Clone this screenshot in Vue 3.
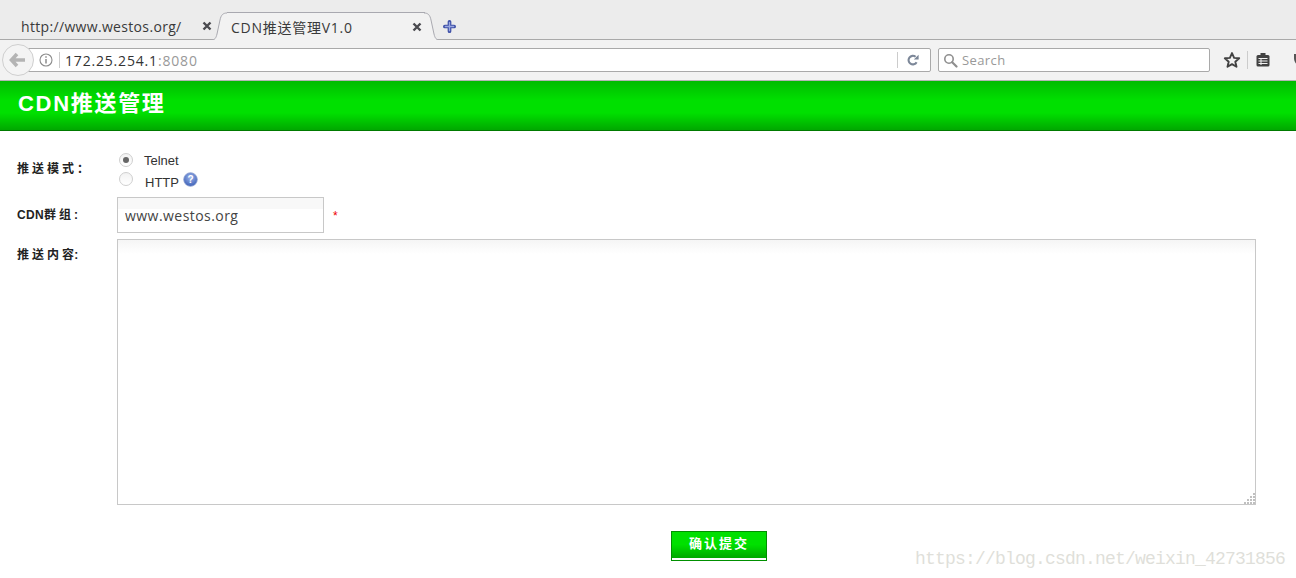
<script setup>
const tabs = [
  { title: 'http://www.westos.org/', active: false },
  { title: 'CDN推送管理V1.0', active: true }
]
const gripDots = []
for (let r = 0; r < 4; r++) {
  for (let c = 3 - r; c < 4; c++) {
    gripDots.push({ x: c * 3, y: r * 3 })
  }
}
</script>

<template>
  <div class="page">
    <div class="tabbar">
      <div v-for="t in tabs" :key="t.title" class="tab" :class="{ active: t.active }">
        <svg v-if="t.active" class="curve left" width="16" height="29" viewBox="0 0 16 29">
          <path d="M0 28C4 28 5 26 6 22L9 8C10 3 12 1 16 1V29H0Z" fill="#f2f2f2" />
          <path d="M0 28C4 28 5 26 6 22L9 8C10 3 12 1 16 1" fill="none" stroke="#a9a9b0" />
        </svg>
        <span class="tab-title">{{ t.title }}</span>
        <svg class="close" width="10" height="10" viewBox="0 0 10 10">
          <path d="M1.5 1.5L8.5 8.5M8.5 1.5L1.5 8.5" stroke="#4a4a4f" stroke-width="2.4" />
        </svg>
        <svg v-if="t.active" class="curve right" width="16" height="29" viewBox="0 0 16 29">
          <path d="M0 1C4 1 6 3 7 8L10 22C11 26 12 28 16 28V29H0Z" fill="#f2f2f2" />
          <path d="M0 1C4 1 6 3 7 8L10 22C11 26 12 28 16 28" fill="none" stroke="#a9a9b0" />
        </svg>
      </div>
      <svg class="plus" width="13" height="13" viewBox="0 0 14 14">
        <path d="M7 2V12M2 7H12" stroke="#3f51a8" stroke-width="4" stroke-linecap="round" />
        <path d="M7 2.5V11.5M2.5 7H11.5" stroke="#9aa8e0" stroke-width="1.4" stroke-linecap="round" />
      </svg>
    </div>

    <div class="toolbar">
      <div class="urlbar">
        <svg class="info" width="14" height="14" viewBox="0 0 14 14">
          <circle cx="7" cy="7" r="6" fill="none" stroke="#8c8c8c" stroke-width="1.1" />
          <path d="M7 6V10.5M7 3.3V4.8" stroke="#8c8c8c" stroke-width="1.5" />
        </svg>
        <span class="sep"></span>
        <span class="url">172.25.254.1<span class="port">:8080</span></span>
        <span class="sep end"></span>
        <svg class="reload" width="14" height="14" viewBox="0 0 14 14">
          <path d="M10.6 9.2A4.3 4.3 0 1 1 9.6 3.8" fill="none" stroke="#7c8798" stroke-width="2.1" />
          <path d="M7.8 6.6H12.6V1.8Z" fill="#7c8798" />
        </svg>
      </div>
      <div class="searchbar">
        <svg width="15" height="15" viewBox="0 0 15 15">
          <circle cx="6" cy="6" r="4.2" fill="none" stroke="#8f8f8f" stroke-width="1.6" />
          <path d="M9.2 9.2L13.5 13.5" stroke="#8f8f8f" stroke-width="2.2" stroke-linecap="round" />
        </svg>
        <span class="search-text">Search</span>
      </div>
      <svg class="tool star" width="18" height="18" viewBox="0 0 18 18">
        <path d="M9 2L11.1 6.9L16.2 7.3L12.3 10.7L13.5 15.8L9 13.1L4.5 15.8L5.7 10.7L1.8 7.3L6.9 6.9Z" fill="none" stroke="#424242" stroke-width="1.9" stroke-linejoin="round" />
      </svg>
      <span class="tool-sep"></span>
      <svg class="tool list" width="16" height="16" viewBox="0 0 16 16">
        <rect x="1.5" y="3" width="13" height="11.5" rx="1.5" fill="#424242" />
        <rect x="5.5" y="1" width="5" height="3" fill="#424242" />
        <path d="M3.5 6.5H12.5M3.5 9H12.5M3.5 11.5H12.5M6 6V13" stroke="#f2f2f2" stroke-width="1" />
      </svg>
      <svg class="tool shield" width="10" height="16" viewBox="0 0 10 16">
        <path d="M1 2H10V15C5 14 1 11 1 6Z" fill="#555" />
      </svg>
      <div class="back">
        <svg width="18" height="16" viewBox="0 0 18 16">
          <path d="M8 2L2.5 8L8 14M3 8H16" fill="none" stroke="#b4b4b4" stroke-width="3.6" />
        </svg>
      </div>
    </div>

    <header class="banner">CDN推送管理</header>

    <form class="form" @submit.prevent>
      <div class="row mode">
        <label class="label label-mode"><span class="cjk">推送模式：</span></label>
        <div class="radios">
          <div class="radio-row">
            <span class="radio on"></span>
            <span>Telnet</span>
          </div>
          <div class="radio-row second">
            <span class="radio"></span>
            <span class="http">HTTP</span>
            <svg class="help" width="15" height="15" viewBox="0 0 15 15">
              <defs>
                <radialGradient id="helpfill" cx="50%" cy="35%" r="65%">
                  <stop offset="0" stop-color="#9db4ea" />
                  <stop offset="1" stop-color="#3e62b8" />
                </radialGradient>
              </defs>
              <circle cx="7.5" cy="7.5" r="6.8" fill="url(#helpfill)" stroke="#8ba0d0" stroke-width=".8" />
              <text x="7.5" y="11" text-anchor="middle" class="help-q">?</text>
            </svg>
          </div>
        </div>
      </div>

      <div class="row group">
        <label class="label label-group">CDN<span class="cjk">群组</span>:</label>
        <input class="text" value="www.westos.org" />
        <span class="req">*</span>
      </div>

      <div class="row content">
        <label class="label label-content"><span class="cjk">推送内</span>容:</label>
        <div class="area-wrap">
          <textarea class="area"></textarea>
          <svg class="grip" width="11" height="11" viewBox="0 0 11 11">
            <rect v-for="d in gripDots" :key="d.x + '-' + d.y" :x="d.x" :y="d.y" width="2" height="2" fill="#c0c0c0" />
          </svg>
        </div>
      </div>

      <div class="actions">
        <button class="submit" type="button">确认提交</button>
      </div>
    </form>

    <div class="watermark">https://blog.csdn.net/weixin_42731856</div>
  </div>
</template>

<style>
html, body { margin: 0; padding: 0; background: #fff; overflow: hidden; }
</style>

<style scoped>
.page {
  position: relative;
  width: 1296px;
  height: 578px;
  overflow: hidden;
  background: #fff;
  font-family: "Open Sans", "Noto Sans", "Noto Sans CJK SC", sans-serif;
}
.tabbar {
  height: 40px;
  box-sizing: border-box;
  background: #ececec;
  border-bottom: 1px solid #a9a9a9;
  display: flex;
  align-items: flex-end;
  padding-left: 21px;
}
.tab {
  position: relative;
  height: 28px;
  box-sizing: border-box;
  padding-top: 2px;
  display: flex;
  align-items: center;
  font-size: 14px;
  letter-spacing: .33px;
  color: #3a3a3a;
}
.tab:first-child { width: 198px; }
.tab.active {
  width: 198px;
  margin-left: 8px;
  padding: 0 0 0 4px;
  letter-spacing: .75px;
  background: #f2f2f2;
  border-top: 1px solid #a9a9b0;
  margin-bottom: -1px;
}
.tab-title { flex: 1; white-space: nowrap; }
.close { margin-right: 7px; }
.tab.active .close { margin-right: 3px; }
.curve { position: absolute; top: -1px; }
.curve.left { left: -16px; }
.curve.right { right: -15px; }
.plus { margin: 0 0 6px 18px; }
.toolbar {
  position: relative;
  height: 41px;
  box-sizing: border-box;
  background: #f2f2f2;
  border-bottom: 1px solid #b4b4b4;
  display: flex;
  align-items: center;
  padding-left: 27px;
}
.urlbar {
  flex: none;
  width: 904px;
  height: 24px;
  box-sizing: border-box;
  background: #fff;
  border: 1px solid #a9a9a9;
  border-radius: 0 2px 2px 0;
  display: flex;
  align-items: center;
}
.info { margin-left: 11px; }
.sep { width: 1px; height: 16px; background: #ccc; margin-left: 6px; }
.url {
  flex: 1;
  margin-left: 5px;
  font-size: 14px;
  letter-spacing: .82px;
  color: #333;
}
.port { color: #999; }
.sep.end { margin-right: 8px; }
.reload { margin-right: 10px; }
.searchbar {
  flex: none;
  width: 272px;
  height: 24px;
  box-sizing: border-box;
  margin-left: 7px;
  background: #fff;
  border: 1px solid #a9a9a9;
  border-radius: 2px;
  display: flex;
  align-items: center;
  padding-left: 4px;
  gap: 4px;
  font-size: 13px;
  letter-spacing: .4px;
  color: #999;
}
.tool { flex: none; }
.star { margin-left: 13px; }
.tool-sep { flex: none; width: 1px; height: 18px; background: #ccc; margin: 0 7px 0 6px; }
.shield { margin-left: 22px; }
.back {
  position: absolute;
  left: 2px;
  top: 4px;
  width: 32px;
  height: 32px;
  box-sizing: border-box;
  border: 1px solid #cfcfcf;
  border-radius: 50%;
  background: #f4f4f4;
  display: flex;
  align-items: center;
  justify-content: center;
}
.banner {
  height: 50px;
  box-sizing: border-box;
  padding-left: 18px;
  border-bottom: 1px solid #007a00;
  background: linear-gradient(#00bb00 0, #00e000 40%, #00e000 65%, #00a800 100%);
  color: #fff;
  font: bold 22px/46px "Liberation Sans", "Noto Sans CJK SC", sans-serif;
  letter-spacing: 1.7px;
}
.form {
  display: flex;
  flex-direction: column;
  padding-top: 19px;
  font-family: "Liberation Sans", "Noto Sans CJK SC", sans-serif;
}
.row { display: flex; align-items: flex-start; }
.label {
  width: 117px;
  box-sizing: border-box;
  padding-left: 17px;
  font-size: 12px;
  font-weight: bold;
  letter-spacing: .3px;
  color: #222;
  flex: none;
}
.cjk { letter-spacing: 3px; }
.label-mode { padding-top: 9px; }
.label-group { padding-top: 8px; }
.label-content { padding-top: 6px; }
.radios { font-size: 13px; color: #333; }
.radio-row { display: flex; align-items: center; height: 20px; }
.radio-row.second { height: 22px; }
.radio {
  width: 14px;
  height: 14px;
  margin: 0 11px 0 2px;
  box-sizing: border-box;
  border: 1px solid #cfcfcf;
  border-radius: 50%;
  background: linear-gradient(#f2f2f2, #fff);
  display: flex;
  align-items: center;
  justify-content: center;
}
.radio.on::after {
  content: "";
  width: 6px;
  height: 6px;
  border-radius: 50%;
  background: #666;
}
.second .radio { margin-top: -4px; margin-right: 12px; }
.http { margin-top: 3px; }
.help { margin: -3px 0 0 4px; }
.help-q { font: bold 10px "Liberation Sans", sans-serif; fill: #fff; }
.group { margin-top: 5px; }
.text {
  width: 207px;
  height: 36px;
  box-sizing: border-box;
  padding: 0 7px;
  border: 1px solid #c8c8c8;
  border-radius: 0;
  background: linear-gradient(#f8f8f8 0, #f8f8f8 11px, #fff 11px);
  font: 14px "Open Sans", sans-serif;
  letter-spacing: .45px;
  color: #444;
  outline: none;
}
.req { color: #e00; font-size: 12px; margin: 12px 0 0 9px; }
.content { margin-top: 6px; }
.area-wrap { position: relative; width: 1139px; height: 266px; }
.area {
  display: block;
  width: 100%;
  height: 100%;
  box-sizing: border-box;
  padding: 0;
  margin: 0;
  border: 1px solid #c8c8c8;
  border-radius: 0;
  background: linear-gradient(#f5f5f5 0, #fff 14px);
  outline: none;
  resize: none;
}
.grip { position: absolute; right: 1px; bottom: 1px; }
.actions {
  margin-top: 26px;
  padding-left: 671px;
}
.submit {
  display: block;
  width: 96px;
  height: 30px;
  box-sizing: border-box;
  padding: 0 0 7px;
  border: 1px solid #009000;
  box-shadow: inset 0 -2px 0 #fff;
  background: linear-gradient(#00e000 0, #00e000 45%, #00a800 92%);
  color: #fff;
  font: bold 13px "Liberation Sans", "Noto Sans CJK SC", sans-serif;
  letter-spacing: 2px;
}
.watermark {
  position: absolute;
  right: 11px;
  top: 549px;
  font: 18px "Liberation Mono", monospace;
  letter-spacing: -.8px;
  color: #dfdfda;
  white-space: nowrap;
}
</style>
